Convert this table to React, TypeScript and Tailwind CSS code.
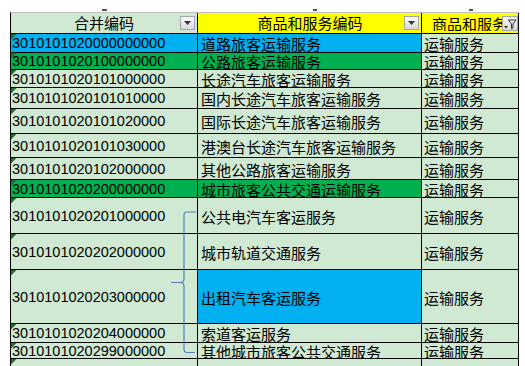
import React from 'react';

const LIGHT = '#cfe9d2';
const BLUE = '#00b0f0';
const GREEN = '#00b050';

type Row = {
  code: string;
  name: string;
  h: number;
  c1?: string;
  c2?: string;
};

const rows: Row[] = [
  { code: '3010101020000000000', name: '道路旅客运输服务', h: 19, c1: BLUE, c2: BLUE },
  { code: '3010101020100000000', name: '公路旅客运输服务', h: 17, c1: GREEN, c2: GREEN },
  { code: '3010101020101000000', name: '长途汽车旅客运输服务', h: 18 },
  { code: '3010101020101010000', name: '国内长途汽车旅客运输服务', h: 21 },
  { code: '3010101020101020000', name: '国际长途汽车旅客运输服务', h: 25 },
  { code: '3010101020101030000', name: '港澳台长途汽车旅客运输服务', h: 24 },
  { code: '3010101020102000000', name: '其他公路旅客运输服务', h: 22 },
  { code: '3010101020200000000', name: '城市旅客公共交通运输服务', h: 18, c1: GREEN, c2: GREEN },
  { code: '3010101020201000000', name: '公共电汽车客运服务', h: 36 },
  { code: '3010101020202000000', name: '城市轨道交通服务', h: 36 },
  { code: '3010101020203000000', name: '出租汽车客运服务', h: 54, c2: BLUE },
  { code: '3010101020204000000', name: '索道客运服务', h: 19 },
  { code: '3010101020299000000', name: '其他城市旅客公共交通服务', h: 16 },
];

const cjk = { fontFamily: '"Noto Sans CJK SC", "Liberation Sans", sans-serif' };
const num = { fontFamily: '"Liberation Sans", "Noto Sans CJK SC", sans-serif' };

function DropButton() {
  return (
    <div className="w-[15px] h-[14px] shrink-0 border border-[#a7a7a7] bg-gradient-to-b from-[#fbfbfb] to-[#d9d9d9] flex items-center justify-center">
      <svg width="7" height="4" viewBox="0 0 7 4">
        <path d="M0 0 L7 0 L3.5 4 Z" fill="#333" />
      </svg>
    </div>
  );
}

function FilterButton() {
  return (
    <div className="w-[16px] h-[15px] shrink-0 border border-[#a7a7a7] bg-gradient-to-b from-[#fbfbfb] to-[#d9d9d9] flex items-end justify-center">
      <svg width="14" height="12" viewBox="0 0 14 12">
        <path d="M1 8 L5 8 L3 10.5 Z" fill="#333" />
        <path d="M5.5 2 L13 2 L10 6 L10 10 L8.5 10.8 L8.5 6 Z" fill="none" stroke="#333" strokeWidth="1" />
      </svg>
    </div>
  );
}

function Marker() {
  return (
    <svg className="absolute left-0 top-0" width="6" height="6" viewBox="0 0 6 6">
      <path d="M0 0 L5.5 0 L0 5.5 Z" fill="#1f6f2a" />
    </svg>
  );
}

export default function App() {
  return (
    <div className="w-[525px] h-[366px] overflow-hidden bg-white text-black">
      <div className="ml-[10px] w-[509px]">
        {/* column letter remnants above the header */}
        <div className="flex h-[12px] pl-px">
          <div className="w-[187px] flex items-end justify-center pb-px">
            <div className="w-[5px] h-[2px] bg-[#555]" />
          </div>
          <div className="w-[224px] flex items-end justify-center pb-px pl-[10px]">
            <div className="w-[4px] h-[2px] bg-[#555]" />
          </div>
          <div className="w-[97px] flex items-end justify-center pb-px">
            <div className="w-[4px] h-[2px] bg-[#555]" />
          </div>
        </div>

        <div className="relative border-t border-t-[#bfbfbf] border-l border-l-black">
          {/* header */}
          <div className="flex h-[21px]">
            <div
              className="w-[187px] flex items-center border-r border-b border-black pl-[17px] pr-[2px] pb-px"
              style={{ background: LIGHT }}
            >
              <span className="flex-1 text-center text-[15px] leading-none" style={cjk}>
                合并编码
              </span>
              <DropButton />
            </div>
            <div className="w-[224px] flex items-center border-r border-b border-black bg-[#ffff00] pl-[18px] pr-[2px] pb-px">
              <span className="flex-1 text-center text-[15px] leading-none" style={cjk}>
                商品和服务编码
              </span>
              <DropButton />
            </div>
            <div className="w-[97px] flex items-center border-r border-b border-black bg-[#ffff00] overflow-hidden">
              <span className="flex-1 overflow-hidden whitespace-nowrap pl-[10px] text-[15px] leading-none" style={cjk}>
                商品和服务
              </span>
              <FilterButton />
            </div>
          </div>

          {rows.map((r) => (
            <div key={r.code} className="flex" style={{ height: r.h }}>
              <div
                className="relative w-[187px] flex items-center border-r border-b border-black pl-[1px] pt-px"
                style={{ background: r.c1 ?? LIGHT }}
              >
                <Marker />
                <span className="text-[14.5px] leading-none" style={num}>
                  {r.code}
                </span>
              </div>
              <div
                className="w-[224px] flex items-center border-r border-b border-black pl-[3px] pt-px"
                style={{ background: r.c2 ?? LIGHT }}
              >
                <span className="text-[15px] leading-none whitespace-nowrap" style={cjk}>
                  {r.name}
                </span>
              </div>
              <div
                className="w-[97px] flex items-center border-r border-b border-black pl-[2px] pt-px"
                style={{ background: LIGHT }}
              >
                <span className="text-[15px] leading-none" style={cjk}>
                  运输服务
                </span>
              </div>
            </div>
          ))}

          {/* partially visible next row */}
          <div className="flex h-[20px]">
            <div className="relative w-[187px] border-r border-black" style={{ background: LIGHT }}>
              <Marker />
            </div>
            <div className="w-[224px] border-r border-black" style={{ background: LIGHT }} />
            <div className="w-[97px] border-r border-black" style={{ background: LIGHT }} />
          </div>

          {/* hand-drawn brace spanning the city transit rows */}
          <svg
            className="absolute left-0 top-0 pointer-events-none"
            width="509"
            height="360"
            viewBox="0 0 509 360"
          >
            <path
              d="M185 199 L176 199 Q173 199 173 202 L173 266 Q173 269.5 169 269.5 L160 269.5 M169 269.5 Q173 269.5 173 273 L173 336 Q173 339.5 176 339.5 L184 339.5"
              fill="none"
              stroke="#5a7fb6"
              strokeWidth="1.2"
            />
          </svg>
        </div>
      </div>
    </div>
  );
}
